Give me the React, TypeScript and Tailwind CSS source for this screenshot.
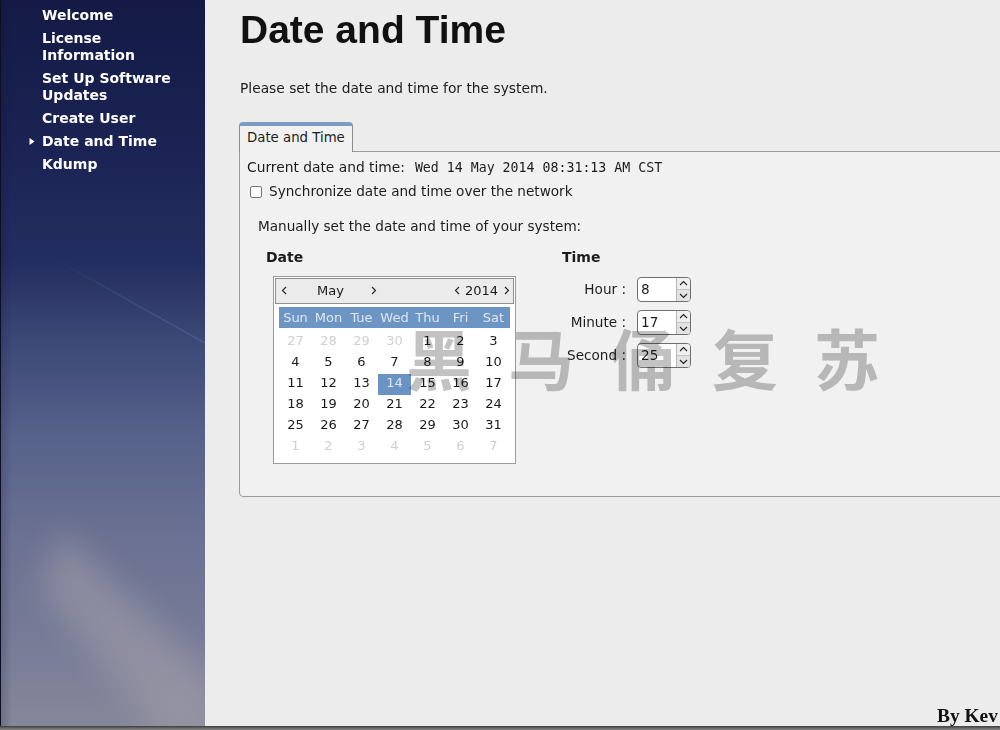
import React from "react";

const uiFont = "font-['DejaVu_Sans',sans-serif]";

const navItems = ["Welcome", "License\nInformation", "Set Up Software\nUpdates", "Create User", "Date and Time", "Kdump"];

const weekdays = ["Sun", "Mon", "Tue", "Wed", "Thu", "Fri", "Sat"];

// [day, belongs to the current month]
const days: [number, boolean][] = [
  [27, false], [28, false], [29, false], [30, false], [1, true], [2, true], [3, true],
  [4, true], [5, true], [6, true], [7, true], [8, true], [9, true], [10, true],
  [11, true], [12, true], [13, true], [14, true], [15, true], [16, true], [17, true],
  [18, true], [19, true], [20, true], [21, true], [22, true], [23, true], [24, true],
  [25, true], [26, true], [27, true], [28, true], [29, true], [30, true], [31, true],
  [1, false], [2, false], [3, false], [4, false], [5, false], [6, false], [7, false],
];

const Chevron: React.FC<{ dir: "left" | "right" | "up" | "down"; className?: string }> = ({ dir, className }) => {
  const paths = {
    left: "M6 1 L2.5 4.5 L6 8",
    right: "M3 1 L6.5 4.5 L3 8",
    up: "M1 6 L4.5 2.5 L8 6",
    down: "M1 3 L4.5 6.5 L8 3",
  };
  return (
    <svg width="9" height="9" viewBox="0 0 9 9" className={className} fill="none" stroke="#222" strokeWidth="1.1">
      <path d={paths[dir]} />
    </svg>
  );
};

const SidebarArt = () => (
  <svg className="absolute inset-0" width="205" height="726" viewBox="0 0 205 726">
    <defs>
      <linearGradient id="sky" x1="0" y1="0" x2="0" y2="1">
        <stop offset="0" stopColor="#141a45" />
        <stop offset="0.2" stopColor="#1a2353" />
        <stop offset="0.36" stopColor="#232e60" />
        <stop offset="0.46" stopColor="#3a4674" />
        <stop offset="0.6" stopColor="#56628a" />
        <stop offset="0.74" stopColor="#6b7192" />
        <stop offset="0.88" stopColor="#777b97" />
        <stop offset="1" stopColor="#858799" />
      </linearGradient>
      <linearGradient id="edge" x1="0" y1="0" x2="1" y2="0">
        <stop offset="0" stopColor="#0c1030" stopOpacity="0.2" />
        <stop offset="1" stopColor="#0c1030" stopOpacity="0" />
      </linearGradient>
      <linearGradient id="trail" x1="0" y1="0" x2="1" y2="0">
        <stop offset="0" stopColor="#4c5c92" stopOpacity="0" />
        <stop offset="1" stopColor="#4c5c92" stopOpacity="0.9" />
      </linearGradient>
      <filter id="soft" x="-50%" y="-50%" width="200%" height="200%">
        <feGaussianBlur stdDeviation="16" />
      </filter>
    </defs>
    <rect width="205" height="726" fill="url(#sky)" />
    <g opacity="0.45">
      <path d="M60 530 L215 680 L215 740 L165 740 L40 590 Z" fill="#aca6ae" filter="url(#soft)" />
    </g>
    <path d="M60 262 L205 343" stroke="url(#trail)" strokeWidth="1.5" fill="none" />
    <rect width="12" height="726" fill="url(#edge)" />
    <rect width="1" height="726" fill="#0c0f24" />
  </svg>
);

const Spin: React.FC<{ label: string; value: number }> = ({ label, value }) => (
  <div className="flex items-center h-[25px]">
    <span className="w-[64px] text-right whitespace-nowrap">{label}</span>
    <div className="ml-[11px] flex w-[54px] h-[25px] rounded-[4px] border border-[#6f6f6f] overflow-hidden bg-white">
      <span className="flex-1 pl-[3px] leading-[23px]">{value}</span>
      <div className="w-[14px] flex flex-col border-l border-[#b5b5b5] bg-[#efefef]">
        <div className="flex-1 flex items-center justify-center border-b border-[#c4c4c4]">
          <Chevron dir="up" />
        </div>
        <div className="flex-1 flex items-center justify-center bg-[#e2e2e2]">
          <Chevron dir="down" />
        </div>
      </div>
    </div>
  </div>
);

const Calendar = () => (
  <div className="w-[243px] h-[188px] border border-[#9b9b9b] bg-white p-px text-[13px]">
    <div className="h-[26px] pb-px flex items-center border border-[#8f8f8f] bg-[#ebebeb] text-[#1a1a1a]">
      <Chevron dir="left" className="ml-[4px]" />
      <span className="ml-[28px]">May</span>
      <Chevron dir="right" className="ml-[25px]" />
      <Chevron dir="left" className="ml-[75px]" />
      <span className="ml-[3px]">2014</span>
      <Chevron dir="right" className="ml-[4px]" />
    </div>
    <div className="ml-[4px] mt-[3px] w-[231px] grid grid-cols-7 h-[21px] bg-[#6d95c4] text-[#dde7f3] leading-[21px] text-center">
      {weekdays.map((d) => (
        <span key={d}>{d}</span>
      ))}
    </div>
    <div className="ml-[4px] w-[231px] grid grid-cols-7 auto-rows-[21px] pt-[1.5px] leading-[21px] text-center text-[#1a1a1a]">
      {days.map(([d, current], i) => (
        <span
          key={i}
          className={
            current && d === 14
              ? "mt-[2px] h-[21px] leading-[17px] bg-[#6a93c3] text-[#dde7f3]"
              : current
                ? ""
                : "text-[#cfcfcf]"
          }
        >
          {d}
        </span>
      ))}
    </div>
  </div>
);

export default function App() {
  return (
    <div className={`relative w-[1000px] h-[730px] overflow-hidden flex flex-col bg-[#ececec] text-[#1c1c1c] text-[13.6px] ${uiFont}`}>
      <div className="flex-1 flex min-h-0">
        <aside className="relative w-[205px] shrink-0">
          <SidebarArt />
          <ul className="relative pt-[6.5px] pl-[42px] flex flex-col gap-[6px] text-white font-bold text-[14px] leading-[17px]">
            {navItems.map((item) => (
              <li key={item} className="relative whitespace-pre-line">
                {item === "Date and Time" && (
                  <svg width="6" height="7" viewBox="0 0 6 7" className="absolute left-[-13px] top-[5px]">
                    <path d="M0.5 0 L5.5 3.5 L0.5 7 Z" fill="#fff" />
                  </svg>
                )}
                {item}
              </li>
            ))}
          </ul>
        </aside>

        <main className="flex-1 min-w-0 pl-[34px]">
          <h1 className="mt-[8px] pl-px font-['Liberation_Sans',sans-serif] font-bold text-[39px] leading-[43px] text-[#111]">
            Date and Time
          </h1>
          <p className="mt-[29px] pl-px leading-[17px] text-[13.8px]">Please set the date and time for the system.</p>

          <div className="mt-[25px] w-[800px]">
            <div className="relative z-10 w-[114px] h-[30px] -mb-px rounded-t-[4px] border border-[#8a8a8a] border-b-0 border-t-[4px] border-t-[#7d9ac0] bg-[#f2f1f1] pl-[7px] leading-[23px] text-[13.3px]">
              Date and Time
            </div>
            <section className="h-[346px] border border-[#9c9c9c] rounded-bl-[4px] bg-[#f2f1f1] pl-[7px]">
              <div className="pt-[7px] flex items-center h-[24px] leading-[17px]">
                <span className="text-[13.8px]">Current date and time:</span>
                <span className="ml-[10px] font-['DejaVu_Sans_Mono',monospace] text-[13.25px]">
                  Wed 14 May 2014 08:31:13 AM CST
                </span>
              </div>
              <label className="mt-[7px] ml-[3px] flex items-center gap-[7px] h-[17px]">
                <span className="w-[12px] h-[12px] border border-[#777] rounded-[2px] bg-white" />
                Synchronize date and time over the network
              </label>
              <p className="mt-[18px] ml-[11px] leading-[17px]">Manually set the date and time of your system:</p>

              <div className="mt-[14px] ml-[19px] flex">
                <div className="w-[296px]">
                  <h2 className="font-bold text-[14px] leading-[17px]">Date</h2>
                  <div className="mt-[10px] ml-[7px]">
                    <Calendar />
                  </div>
                </div>
                <div>
                  <h2 className="font-bold text-[14px] leading-[17px]">Time</h2>
                  <div className="mt-[11px] flex flex-col gap-[8px]">
                    <Spin label="Hour :" value={8} />
                    <Spin label="Minute :" value={17} />
                    <Spin label="Second :" value={25} />
                  </div>
                </div>
              </div>
            </section>
          </div>
        </main>
      </div>

      <div className="h-[4px] shrink-0 bg-gradient-to-b from-[#3f3f3f] to-[#8a8a8a]" />

      <span className="absolute left-[406px] top-[311px] font-['Noto_Sans_CJK_SC',sans-serif] font-bold text-[66px] leading-[90px] tracking-[36px] whitespace-nowrap text-[#c2c2c2] mix-blend-multiply pointer-events-none">
        黑马俑复苏
      </span>
      <span className="absolute left-[937px] top-[704px] font-['Liberation_Serif',serif] font-bold text-[19.4px] leading-[23px] text-[#111] whitespace-nowrap">
        By Kev
      </span>
    </div>
  );
}
